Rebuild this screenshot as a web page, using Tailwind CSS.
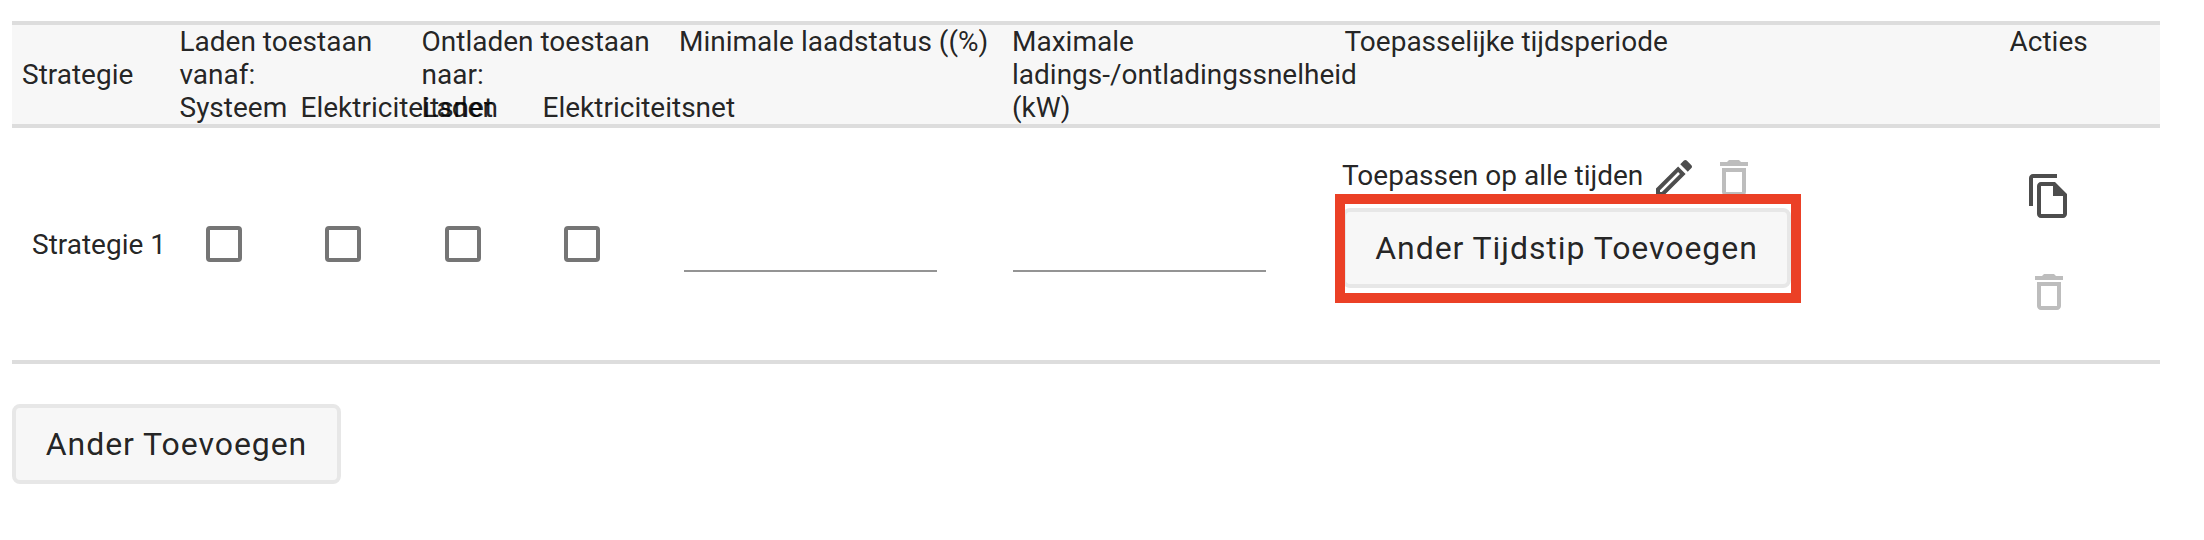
<!DOCTYPE html>
<html lang="nl">
<head>
    <meta charset="UTF-8">
    <meta name="viewport" content="width=device-width, initial-scale=1">
    <title>Strategie</title>
    <script src="https://cdn.jsdelivr.net/npm/@tailwindcss/browser@4"></script>
</head>
<body class="bg-white font-[Roboto,sans-serif] text-[28px] leading-[33px] text-black/87">
    <div class="ml-3 pt-[21px] w-[2148px]">
        <!-- Table header -->
        <div class="grid grid-cols-[167.5px_242px_257.5px_333px_332.5px_665px_150px] h-[107px] border-y-4 border-[#dddddd] bg-[#f7f7f7] whitespace-nowrap">
            <div class="flex items-center pl-[10px]">Strategie</div>
            <div>
                <p>Laden toestaan<br>vanaf:</p>
                <div class="grid grid-cols-[121px_120px]">
                    <span>Systeem</span>
                    <span>Elektriciteitsnet</span>
                </div>
            </div>
            <div>
                <p>Ontladen toestaan<br>naar:</p>
                <div class="grid grid-cols-[121px_120px]">
                    <span>Laden</span>
                    <span>Elektriciteitsnet</span>
                </div>
            </div>
            <div>Minimale laadstatus ((%)</div>
            <div>Maximale<br>ladings-/ontladingssnelheid<br>(kW)</div>
            <div>Toepasselijke tijdsperiode</div>
            <div>Acties</div>
        </div>

        <!-- Strategy row -->
        <div class="grid grid-cols-[194px_119px_120px_119px_120px_329px_329px_670px_148px] h-[236px] border-b-4 border-[#dddddd] whitespace-nowrap">
            <div class="self-center pl-5">Strategie 1</div>
            <div class="self-center size-9 border-4 border-[#757575] rounded"></div>
            <div class="self-center size-9 border-4 border-[#757575] rounded"></div>
            <div class="self-center size-9 border-4 border-[#757575] rounded"></div>
            <div class="self-center size-9 border-4 border-[#757575] rounded"></div>
            <div class="w-[253px] h-[144px] border-b-2 border-[#949494]"></div>
            <div class="w-[253px] h-[144px] border-b-2 border-[#949494]"></div>
            <div class="pt-[26px]">
                <div class="flex h-10">
                    <span class="w-[308px] pt-[5px]">Toepassen op alle tijden</span>
                    <svg class="size-12 mr-3 shrink-0" viewBox="0 0 24 24" fill="#4d4d4d">
                        <path d="M14.06 9.02l.92.92L5.92 19H5v-.92l9.06-9.06M17.66 3c-.25 0-.51.1-.7.29l-1.83 1.83 3.75 3.75 1.83-1.83c.39-.39.39-1.02 0-1.41l-2.34-2.34c-.2-.2-.45-.29-.71-.29zm-3.6 3.19L3 17.25V21h3.75L17.81 9.94l-3.75-3.75z"/>
                    </svg>
                    <svg class="size-12 shrink-0" viewBox="0 0 24 24" fill="#bdbdbd">
                        <path d="M6 19c0 1.1.9 2 2 2h8c1.1 0 2-.9 2-2V7H6v12zM8 9h8v10H8V9zm7.5-5l-1-1h-5l-1 1H5v2h14V4h-3.5z"/>
                    </svg>
                </div>
                <!-- Highlighted button -->
                <div class="relative -ml-[7px] w-[466px] h-[109px] border-[10px] border-[#eb4026] bg-white overflow-hidden">
                    <button class="-ml-[3px] mt-1 w-[449px] h-20 border-4 border-[#e7e7e7] rounded-lg bg-[#f7f7f7] text-[32px] tracking-[0.94px]">Ander Tijdstip Toevoegen</button>
                </div>
            </div>
            <div class="flex flex-col gap-12 pt-11 pl-[13px]">
                <svg class="size-12" viewBox="0 0 24 24" fill="#4d4d4d">
                    <path d="M16 1H4c-1.1 0-2 .9-2 2v14h2V3h12V1zm-1 4H8c-1.1 0-1.99.9-1.99 2L6 21c0 1.1.89 2 1.99 2H19c1.1 0 2-.9 2-2V11l-6-6zM8 21V7h6v5h5v9H8z"/>
                </svg>
                <svg class="size-12" viewBox="0 0 24 24" fill="#bdbdbd">
                    <path d="M6 19c0 1.1.9 2 2 2h8c1.1 0 2-.9 2-2V7H6v12zM8 9h8v10H8V9zm7.5-5l-1-1h-5l-1 1H5v2h14V4h-3.5z"/>
                </svg>
            </div>
        </div>

        <button class="mt-10 w-[329px] h-20 border-4 border-[#e7e7e7] rounded-lg bg-[#f7f7f7] text-[32px] tracking-[0.94px]">Ander Toevoegen</button>
    </div>
</body>
</html>
